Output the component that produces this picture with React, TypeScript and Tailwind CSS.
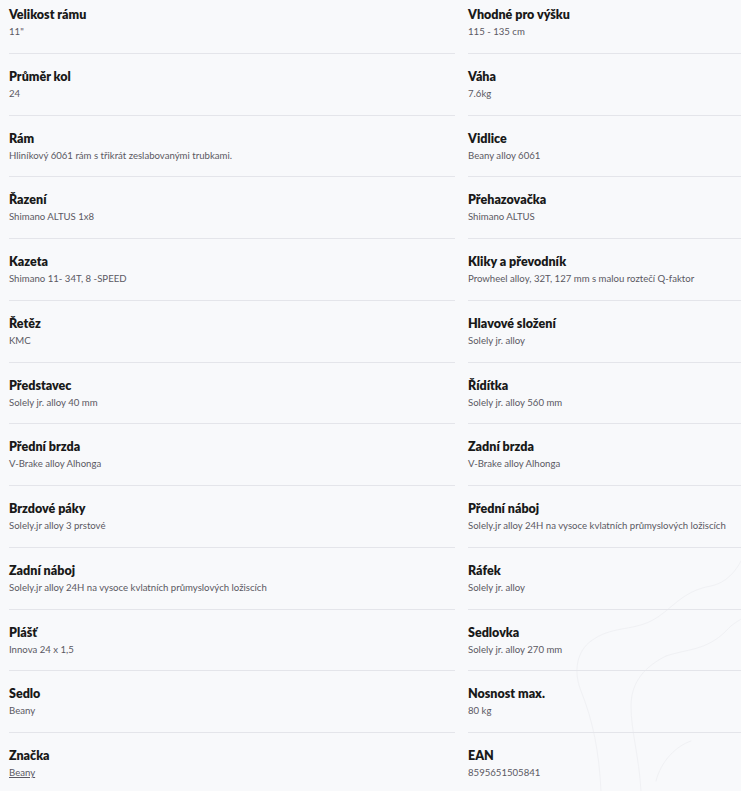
import React from 'react';

type Spec = { label: string; value: string; link?: boolean };

const left: Spec[] = [
  { label: 'Velikost rámu', value: '11"' },
  { label: 'Průměr kol', value: '24' },
  { label: 'Rám', value: 'Hliníkový 6061 rám s třikrát zeslabovanými trubkami.' },
  { label: 'Řazení', value: 'Shimano ALTUS 1x8' },
  { label: 'Kazeta', value: 'Shimano 11- 34T, 8 -SPEED' },
  { label: 'Řetěz', value: 'KMC' },
  { label: 'Představec', value: 'Solely jr. alloy 40 mm' },
  { label: 'Přední brzda', value: 'V-Brake alloy Alhonga' },
  { label: 'Brzdové páky', value: 'Solely.jr alloy 3 prstové' },
  { label: 'Zadní náboj', value: 'Solely.jr alloy 24H na vysoce kvlatních průmyslových ložiscích' },
  { label: 'Plášť', value: 'Innova 24 x 1,5' },
  { label: 'Sedlo', value: 'Beany' },
  { label: 'Značka', value: 'Beany', link: true },
];

const right: Spec[] = [
  { label: 'Vhodné pro výšku', value: '115 - 135 cm' },
  { label: 'Váha', value: '7.6kg' },
  { label: 'Vidlice', value: 'Beany alloy 6061' },
  { label: 'Přehazovačka', value: 'Shimano ALTUS' },
  { label: 'Kliky a převodník', value: 'Prowheel alloy, 32T, 127 mm s malou roztečí Q-faktor' },
  { label: 'Hlavové složení', value: 'Solely jr. alloy' },
  { label: 'Řídítka', value: 'Solely jr. alloy 560 mm' },
  { label: 'Zadní brzda', value: 'V-Brake alloy Alhonga' },
  { label: 'Přední náboj', value: 'Solely.jr alloy 24H na vysoce kvlatních průmyslových ložiscích' },
  { label: 'Ráfek', value: 'Solely jr. alloy' },
  { label: 'Sedlovka', value: 'Solely jr. alloy 270 mm' },
  { label: 'Nosnost max.', value: '80 kg' },
  { label: 'EAN', value: '8595651505841' },
];

function SpecRow({ spec, last }: { spec: Spec; last: boolean }) {
  return (
    <div className={`pt-[14px] pb-[12.75px] ${last ? '' : 'border-b border-[#e4e5ea]'}`}>
      <div className="text-[12.5px] leading-[18px] font-extrabold text-[#191919]">{spec.label}</div>
      <div className="text-[9.6px] leading-[16px] text-[#5a5862]">
        {spec.link ? <span className="underline">{spec.value}</span> : spec.value}
      </div>
    </div>
  );
}

// faint sketch in the lower right, barely visible like the original background
function Sketch() {
  return (
    <svg className="absolute right-0 bottom-0 pointer-events-none" width="260" height="260" viewBox="0 0 260 260" fill="none">
      <g stroke="#f0f1f4" strokeWidth="1" strokeLinecap="round">
        <path d="M120 260 C118 220 112 190 100 160 C92 140 96 120 110 110" />
        <path d="M160 260 C158 225 150 200 150 175 C150 150 165 135 185 125" />
        <path d="M110 110 C130 95 150 100 170 90 C190 80 200 60 230 55 C245 52 255 40 260 30" />
        <path d="M185 125 C205 118 225 120 245 100 C252 92 258 90 260 88" />
        <path d="M175 250 C180 230 195 215 210 210" />
      </g>
    </svg>
  );
}

export default function App() {
  return (
    <div
      className="relative w-full h-[791px] overflow-hidden bg-[#f8f9fb]"
      style={{ fontFamily: '"Lato", "Open Sans", sans-serif' }}
    >
      <Sketch />
      <div className="relative -mt-[8px] pl-[9px] grid grid-cols-[446px_1fr] gap-x-[13px]">
        <div className="flex flex-col">
          {left.map((s, i) => <SpecRow key={s.label} spec={s} last={i === left.length - 1} />)}
        </div>
        <div className="flex flex-col">
          {right.map((s, i) => <SpecRow key={s.label} spec={s} last={i === right.length - 1} />)}
        </div>
      </div>
    </div>
  );
}
